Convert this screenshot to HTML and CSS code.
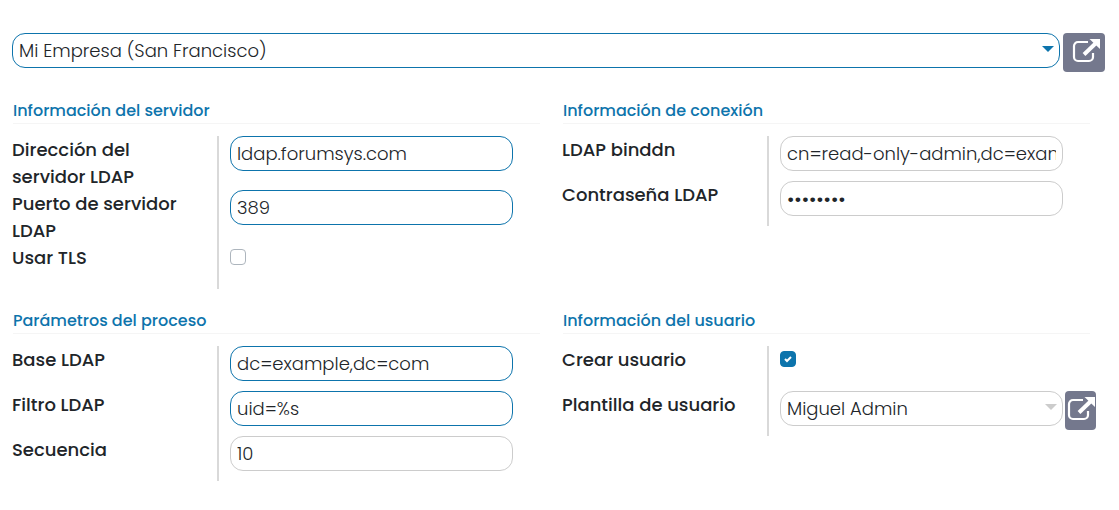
FILE: index.html
```html
<!DOCTYPE html>
<html lang="es">
<head>
<meta charset="utf-8">
<meta name="viewport" content="width=device-width, initial-scale=1">
<title>Servidor LDAP</title>
<link rel="stylesheet" href="styles.css">
</head>
<body>
<svg class="symbols">
  <symbol id="external" viewBox="0 0 28 24">
    <path d="M16 3H6a4 4 0 0 0-4 4v11a4 4 0 0 0 4 4h11a4 4 0 0 0 4-4v-4" fill="none" stroke="currentColor" stroke-width="2.200"/>
    <path d="M12 15.500L23.500 4.500" fill="none" stroke="currentColor" stroke-width="4"/>
    <path d="M17.500 0H28v10z" fill="currentColor"/>
  </symbol>
</svg>
<form class="sheet">
  <div class="company">
    <div class="picker">
      <select class="control required" aria-label="Empresa"><option>Mi Empresa (San Francisco)</option></select>
      <svg class="caret" viewBox="0 0 10 5"><path d="M0 0h10L5 5z" fill="currentColor"/></svg>
    </div>
    <button class="open open-wide" type="button" aria-label="Abrir empresa"><svg class="open-icon"><use href="#external"/></svg></button>
  </div>

  <div class="groups">
    <section>
      <h2 class="title">Información del servidor</h2>
      <div class="row"><label class="label" for="host">Dirección del servidor LDAP</label><div class="field"><input class="control required" id="host" type="text" value="ldap.forumsys.com"></div></div>
      <div class="row"><label class="label" for="port">Puerto de servidor LDAP</label><div class="field"><input class="control required" id="port" type="text" value="389"></div></div>
      <div class="row"><label class="label" for="tls">Usar TLS</label><div class="field"><span class="tick"><input class="box" id="tls" type="checkbox"></span></div></div>
    </section>

    <section>
      <h2 class="title">Información de conexión</h2>
      <div class="row"><label class="label" for="binddn">LDAP binddn</label><div class="field"><input class="control" id="binddn" type="text" value="cn=read-only-admin,dc=example,dc=com"></div></div>
      <div class="row"><label class="label" for="pass">Contraseña LDAP</label><div class="field"><input class="control secret" id="pass" type="password" value="password"></div></div>
    </section>

    <section>
      <h2 class="title">Parámetros del proceso</h2>
      <div class="row"><label class="label" for="base">Base LDAP</label><div class="field"><input class="control required" id="base" type="text" value="dc=example,dc=com"></div></div>
      <div class="row"><label class="label" for="filter">Filtro LDAP</label><div class="field"><input class="control required" id="filter" type="text" value="uid=%s"></div></div>
      <div class="row"><label class="label" for="seq">Secuencia</label><div class="field"><input class="control" id="seq" type="text" value="10"></div></div>
    </section>

    <section>
      <h2 class="title">Información del usuario</h2>
      <div class="row"><label class="label" for="create">Crear usuario</label><div class="field"><span class="tick"><input class="box" id="create" type="checkbox" checked><svg class="check" viewBox="0 0 8 8"><path d="M1 4l2 2 4-4" fill="none" stroke="currentColor" stroke-width="2"/></svg></span></div></div>
      <div class="row"><label class="label" for="template">Plantilla de usuario</label><div class="field">
        <div class="picker">
          <select class="control" id="template"><option>Miguel Admin</option></select>
          <svg class="caret muted" viewBox="0 0 10 5"><path d="M0 0h10L5 5z" fill="currentColor"/></svg>
        </div>
        <button class="open" type="button" aria-label="Abrir plantilla"><svg class="open-icon"><use href="#external"/></svg></button>
      </div></div>
    </section>
  </div>
</form>
</body>
</html>
```
FILE: styles.css
```css
* { box-sizing: border-box; }

body {
  margin: 0;
  background: #fff;
  color: #212529;
  font: 300 18px/27px Poppins, Inter, "Open Sans", sans-serif;
}

.symbols { display: none; }

.sheet { padding: 33px 14px 20px 12px; }

.company {
  display: grid;
  grid-template-columns: 1fr 42px;
  gap: 3px;
  margin-bottom: 27px;
}

.picker { position: relative; height: 35px; }

.control {
  appearance: none;
  display: block;
  width: 100%;
  min-width: 0;
  height: 35px;
  margin: 0;
  padding: 0 6px;
  border: 1px solid #ccc;
  border-radius: 13px;
  background: #fff;
  color: inherit;
  font: inherit;
}

.required { border-color: #0d74ac; }

.secret { font-size: 20px; }

.caret {
  position: absolute;
  top: 13px;
  right: 6px;
  width: 12px;
  height: 6px;
  color: #0d74ac;
  pointer-events: none;
}

.muted { color: #ccc; }

.open {
  display: flex;
  align-items: center;
  justify-content: center;
  height: 39px;
  padding: 0 0 4px;
  border: 0;
  border-radius: 4px;
  background: #74788d;
  color: #fff;
}

.open-wide { padding-left: 4px; }

.open-icon { flex: none; width: 28px; height: 24px; }

.groups {
  display: grid;
  grid-template-columns: 1fr 1fr;
  gap: 20px 16px;
  padding-right: 9px;
}

.title {
  margin: 0 6px 12px 1px;
  border-bottom: 1px solid #f5f5f5;
  color: #0d74ac;
  font-size: 16px;
  font-weight: 500;
  line-height: 24px;
}

.row {
  display: grid;
  grid-template-columns: 207px 1fr;
  gap: 11px;
  min-height: 45px;
}

.label {
  padding-right: 10px;
  border-right: 2px solid #d9d9d9;
  font-weight: 500;
}

.field {
  display: grid;
  grid-template-columns: 1fr 31px;
  gap: 2px;
  align-items: start;
}

.tick { position: relative; display: flex; width: 16px; margin-top: 5px; }

.box {
  appearance: none;
  width: 16px;
  height: 16px;
  margin: 0;
  border: 1px solid #adb5bd;
  border-radius: 4px;
}

.box:checked { border-color: #0d74ac; background: #0d74ac; }

.check {
  position: absolute;
  top: 4px;
  left: 4px;
  width: 8px;
  height: 8px;
  color: #fff;
  pointer-events: none;
}
```
